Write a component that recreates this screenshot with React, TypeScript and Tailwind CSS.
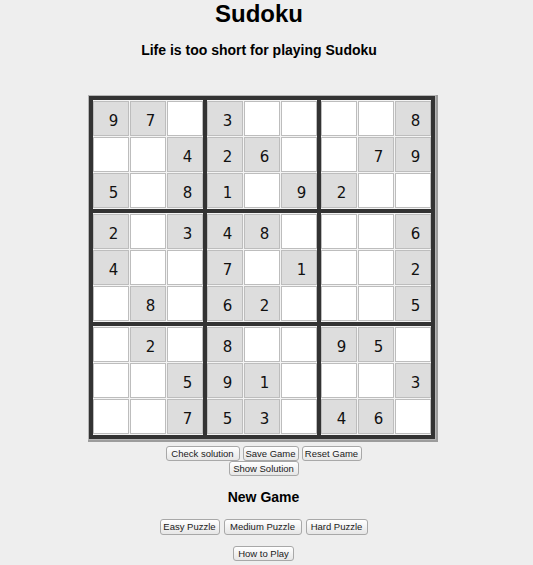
const puzzle = [
  '97_3____8',
  '__426__79',
  '5_81_92__',
  '2_348___6',
  '4__7_1__2',
  '_8_62___5',
  '_2_8__95_',
  '__591___3',
  '__753_46_',
]

function Cell({ value }: { value: string }) {
  const given = value !== '_'
  return (
    <div
      className={`w-[36px] h-[35px] border border-[#bdbdbd] pt-[6px] pl-[5px] flex items-center justify-center text-[15px] text-[#111] ${
        given ? 'bg-[#dddddd]' : 'bg-white'
      }`}
      style={{ fontFamily: '"DejaVu Sans", sans-serif' }}
    >
      {given ? value : ''}
    </div>
  )
}

function Box({ br, bc }: { br: number; bc: number }) {
  const cells: string[] = []
  for (let r = 0; r < 3; r++) {
    for (let c = 0; c < 3; c++) {
      cells.push(puzzle[br * 3 + r][bc * 3 + c])
    }
  }
  return (
    <div className="grid grid-cols-3 gap-[1px] py-[1px] bg-[#f4f4f4]">
      {cells.map((v, i) => (
        <Cell key={i} value={v} />
      ))}
    </div>
  )
}

function Btn({ label, w }: { label: string; w: string }) {
  return (
    <button
      className={`${w} h-[15px] rounded-[3px] border border-[#a8a8a8] bg-gradient-to-b from-white to-[#e6e6e6] text-[9.5px] leading-none text-[#1a1a1a] flex items-center justify-center`}
    >
      {label}
    </button>
  )
}

export default function App() {
  return (
    <div
      className="min-h-screen bg-[#eeeeee] text-black"
      style={{ fontFamily: '"Liberation Sans", Arial, sans-serif' }}
    >
      {/* headings */}
      <div className="w-[518px] text-center">
        <h1 className="text-[24px] leading-[27px] font-bold">Sudoku</h1>
        <h3 className="mt-[15px] text-[14px] leading-[16px] font-bold">
          Life is too short for playing Sudoku
        </h3>
      </div>

      {/* board */}
      <div className="w-[524px] flex justify-center mt-[38px]">
        <div className="grid grid-cols-3 gap-[4px] p-[4px] bg-[#333333] shadow-[0_0_0_1px_#b5b5b5,1px_1px_0_2px_#9c9c9c]">
          {[0, 1, 2].map((br) =>
            [0, 1, 2].map((bc) => <Box key={`${br}-${bc}`} br={br} bc={bc} />)
          )}
        </div>
      </div>

      {/* controls */}
      <div className="w-[527px] flex flex-col items-center mt-[7px]">
        <div className="flex gap-[3px]">
          <Btn label="Check solution" w="w-[74px]" />
          <Btn label="Save Game" w="w-[56px]" />
          <Btn label="Reset Game" w="w-[60px]" />
        </div>
        <Btn label="Show Solution" w="w-[70px]" />

        <h3 className="mt-[13px] text-[14px] leading-[16px] font-bold">New Game</h3>

        <div className="flex gap-[4px] mt-[14px]">
          <Btn label="Easy Puzzle" w="w-[60px] !h-[16px]" />
          <Btn label="Medium Puzzle" w="w-[78px] !h-[16px]" />
          <Btn label="Hard Puzzle" w="w-[62px] !h-[16px]" />
        </div>

        <div className="mt-[11px]">
          <Btn label="How to Play" w="w-[61px]" />
        </div>
      </div>
    </div>
  )
}
